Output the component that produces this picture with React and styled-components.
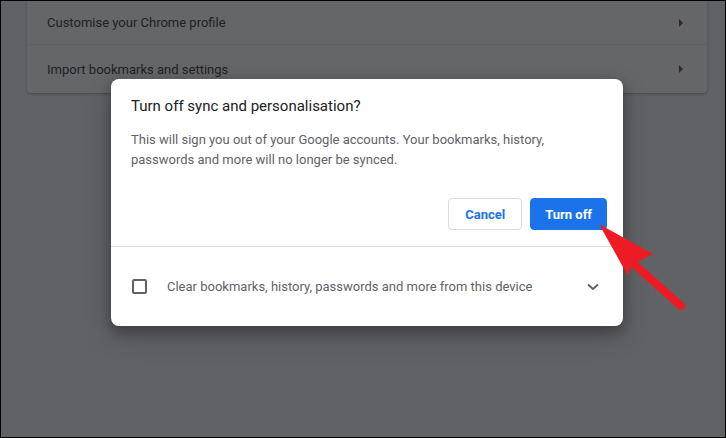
import React from 'react';
import styled, { createGlobalStyle } from 'styled-components';

const GlobalStyle = createGlobalStyle`
  html, body {
    margin: 0;
    padding: 0;
    background: #000;
  }
  body {
    font-family: Roboto, "Liberation Sans", Arial, sans-serif;
  }
`;

const Screen = styled.div`
  position: relative;
  width: 726px;
  height: 438px;
  box-sizing: border-box;
  border: 1px solid #000;
  overflow: hidden;
  background: #f1f3f4;
`;

const Page = styled.div`
  padding: 0 18px 0 26px;
`;

const SettingsCard = styled.div`
  background: #fff;
  border-radius: 0 0 4px 4px;
  box-shadow: 0 1px 2px rgba(60, 64, 67, 0.3), 0 1px 3px 1px rgba(60, 64, 67, 0.15);
`;

const SettingsRow = styled.div`
  display: flex;
  align-items: center;
  justify-content: space-between;
  height: ${({ $height }) => $height}px;
  padding: 0 24px 0 20px;
  font-size: 13px;
  color: #202124;
  border-top: ${({ $divider }) => ($divider ? '1px solid #e8eaed' : 'none')};
`;

const RowArrow = styled.span`
  width: 0;
  height: 0;
  border-top: 4px solid transparent;
  border-bottom: 4px solid transparent;
  border-left: 4px solid #5f2f3a;
`;

const Scrim = styled.div`
  position: absolute;
  inset: 0;
  background: rgba(32, 33, 36, 0.69);
  padding: 78px 0 0 110px;
`;

const Dialog = styled.div`
  width: 512px;
  background: #fff;
  border-radius: 8px;
  box-shadow: 0 4px 8px 3px rgba(0, 0, 0, 0.15), 0 10px 24px rgba(0, 0, 0, 0.25);
`;

const DialogBody = styled.div`
  padding: 17px 16px 16px 20px;
`;

const Title = styled.div`
  font-size: 15px;
  line-height: 20px;
  color: #202124;
`;

const Message = styled.p`
  margin: 14px 0 0;
  font-size: 13px;
  line-height: 20px;
  color: #5f6368;
`;

const Actions = styled.div`
  display: flex;
  justify-content: flex-end;
  gap: 8px;
  margin-top: 28px;
`;

const Button = styled.button`
  height: 32px;
  padding: 0 ${({ $primary }) => ($primary ? 14 : 16)}px;
  box-sizing: border-box;
  border-radius: 4px;
  font-family: Roboto, "Liberation Sans", Arial, sans-serif;
  font-size: 13px;
  font-weight: 700;
  cursor: pointer;
  border: 1px solid ${({ $primary }) => ($primary ? '#1a73e8' : '#dadce0')};
  background: ${({ $primary }) => ($primary ? '#1a73e8' : '#fff')};
  color: ${({ $primary }) => ($primary ? '#fff' : '#1a73e8')};
`;

const Divider = styled.div`
  height: 1px;
  background: #dadce0;
`;

const CheckRow = styled.label`
  display: flex;
  align-items: center;
  height: 79px;
  padding: 0 24px 0 21px;
  font-size: 13px;
  color: #5f6368;
`;

const CheckBox = styled.span`
  width: 15px;
  height: 15px;
  box-sizing: border-box;
  border: 2px solid #5f6368;
  border-radius: 2px;
  margin-right: 20px;
  flex-shrink: 0;
`;

const CheckText = styled.span`
  flex: 1;
`;

const Pointer = styled.svg`
  position: absolute;
  left: 590px;
  top: 215px;
`;

const App = () => (
  <>
    <GlobalStyle />
    <Screen>
      <Page>
        <SettingsCard>
          <SettingsRow $height={43}>
            Customise your Chrome profile
            <RowArrow />
          </SettingsRow>
          <SettingsRow $height={48} $divider>
            Import bookmarks and settings
            <RowArrow />
          </SettingsRow>
        </SettingsCard>
      </Page>
      <Scrim>
        <Dialog>
          <DialogBody>
            <Title>Turn off sync and personalisation?</Title>
            <Message>
              This will sign you out of your Google accounts. Your bookmarks, history,
              <br />
              passwords and more will no longer be synced.
            </Message>
            <Actions>
              <Button>Cancel</Button>
              <Button $primary>Turn off</Button>
            </Actions>
          </DialogBody>
          <Divider />
          <CheckRow>
            <CheckBox />
            <CheckText>Clear bookmarks, history, passwords and more from this device</CheckText>
            <svg width="12" height="8" viewBox="0 0 12 8">
              <path d="M1 1.5 L6 6 L11 1.5" fill="none" stroke="#5f6368" strokeWidth="2" />
            </svg>
          </CheckRow>
        </Dialog>
      </Scrim>
      <Pointer width="100" height="100" viewBox="0 0 100 100">
        <polygon points="8,8 62,38 50,44 40,50 37,60" fill="#ed1c24" />
        <line x1="44" y1="49" x2="90" y2="90" stroke="#ed1c24" strokeWidth="8" strokeLinecap="round" />
      </Pointer>
    </Screen>
  </>
);

export default App;
